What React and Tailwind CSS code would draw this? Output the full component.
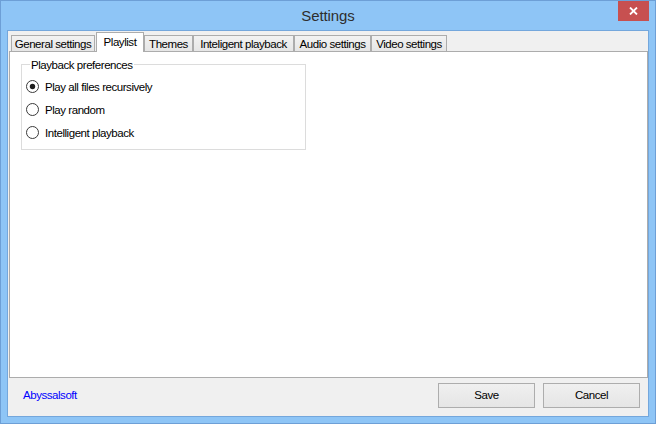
import React, { useState } from "react";

const tabs = [
  { label: "General settings", w: "w-[84px]", gap: "mr-[1px]" },
  { label: "Playlist", w: "w-[48px]" },
  { label: "Themes", w: "w-[49px]" },
  { label: "Inteligent playback", w: "w-[101px]" },
  { label: "Audio settings", w: "w-[77px]" },
  { label: "Video settings", w: "w-[76px]" },
];

const options = ["Play all files recursively", "Play random", "Intelligent playback"];

function Radio({ checked }) {
  return (
    <svg width="13" height="13" viewBox="0 0 13 13" className="shrink-0">
      <circle cx="6.5" cy="6.5" r="6" fill="#fff" stroke="#3a3a3a" strokeWidth="1" />
      {checked && <circle cx="6.5" cy="6.5" r="2.7" fill="#1c1c1c" />}
    </svg>
  );
}

export default function App() {
  const [active, setActive] = useState(1);
  const [choice, setChoice] = useState(0);

  return (
    <div className="w-[656px] h-[424px] flex flex-col bg-[#8ec5f6] border border-[#6d9fd6] px-[6px] pb-[6px] font-['Liberation_Sans',Arial,sans-serif] text-[11.5px] tracking-[-0.45px] text-black">
      {/* title bar */}
      <div className="relative h-[29px] shrink-0 flex items-center justify-center">
        <span className="text-[15px] tracking-[-0.1px] text-[#2e2e2e] pt-[1px]">Settings</span>
        <button className="absolute right-[0px] top-0 w-[31px] h-[20px] bg-[#c75050] flex items-center justify-center">
          <svg width="9" height="8" viewBox="0 0 9 8">
            <path d="M1 0.5 L8 7.5 M8 0.5 L1 7.5" stroke="#fff" strokeWidth="1.8" />
          </svg>
        </button>
      </div>

      {/* client area */}
      <div className="flex-1 flex flex-col bg-[#f0f0f0] border border-[#74a7dc]">
        {/* tab strip */}
        <div className="h-[20px] shrink-0 flex items-end pl-[3px]">
          {tabs.map((t, i) =>
            i === active ? (
              <div
                key={t.label}
                onClick={() => setActive(i)}
                className={`${t.w} ${t.gap || ""} h-[20px] -mb-[1px] relative z-10 bg-white border border-b-0 border-[#acacac] flex items-start justify-center pt-[2px] leading-[14px] cursor-default`}
              >
                {t.label}
              </div>
            ) : (
              <div
                key={t.label}
                onClick={() => setActive(i)}
                className={`${t.w} ${t.gap || ""} h-[16px] bg-linear-to-b from-[#f2f2f2] to-[#e6e6e6] border border-b-0 border-[#acacac] flex items-center justify-center leading-[14px] cursor-default`}
              >
                {t.label}
              </div>
            )
          )}
        </div>

        {/* tab panel */}
        <div className="ml-[1px] w-[639px] h-[327px] shrink-0 bg-white border border-[#acacac] pt-[12px] pl-[11px]">
          <div className="relative w-[285px] h-[86px] border border-[#dcdcdc] pt-[10px] pl-[4px]">
            <span className="absolute -top-[7px] left-[8px] bg-white px-[1px] leading-[14px]">
              Playback preferences
            </span>
            {options.map((o, i) => (
              <div
                key={o}
                onClick={() => setChoice(i)}
                className="h-[23px] flex items-center gap-[6px] cursor-default"
              >
                <Radio checked={choice === i} />
                <span className="leading-[14px]">{o}</span>
              </div>
            ))}
          </div>
        </div>

        {/* footer */}
        <div className="flex-1 flex items-center pb-[3px] pl-[15px] pr-[8px]">
          <a className="text-[#0000ff] cursor-pointer">Abyssalsoft</a>
          <div className="ml-auto flex gap-[8px]">
            <button className="w-[97px] h-[25px] border border-[#adadad] bg-linear-to-b from-[#f0f0f0] to-[#e5e5e5]">
              Save
            </button>
            <button className="w-[97px] h-[25px] border border-[#adadad] bg-linear-to-b from-[#f0f0f0] to-[#e5e5e5]">
              Cancel
            </button>
          </div>
        </div>
      </div>
    </div>
  );
}
